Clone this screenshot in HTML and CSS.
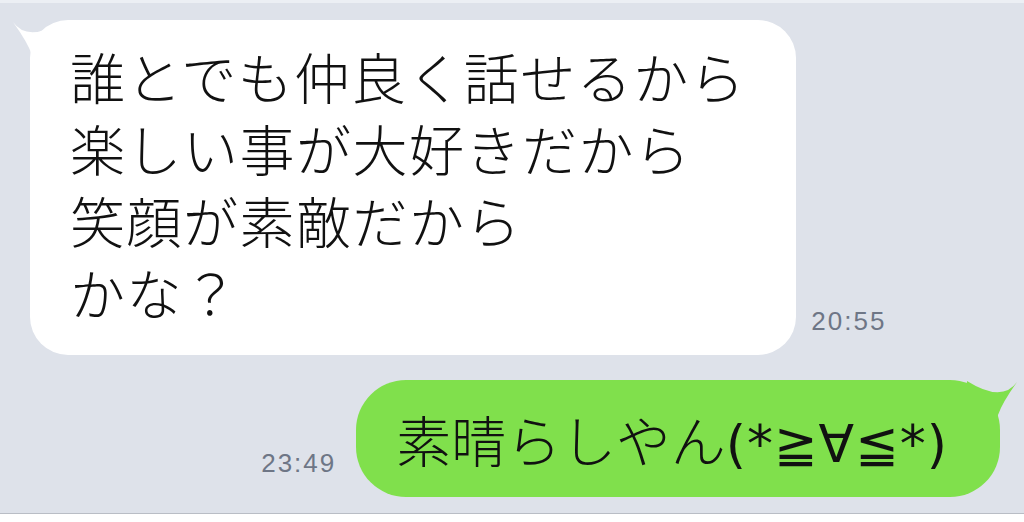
FILE: index.html
```html
<!DOCTYPE html>
<html lang="ja">
<head>
  <meta charset="UTF-8" />
  <meta name="viewport" content="width=device-width, initial-scale=1.0"/>
  <title>Talk</title>
  <link rel="stylesheet" href="styles.css">
</head>
<body>

<div class="chat">
  <div class="row row-in">
    <div class="bubble bubble-in">
      <svg class="tail tail-in" width="60" height="60" viewBox="0 0 60 60">
        <path d="M3,2 Q18,23 53,1 L53,55 L22,55 L22,35 Q18,23 3,2 Z" fill="#ffffff"/>
      </svg>
      <p>誰とでも仲良く話せるから<br>楽しい事が大好きだから<br>笑顔が素敵だから<br>かな？</p>
    </div>
    <span class="time time-in">20:55</span>
  </div>

  <div class="row row-out">
    <span class="time time-out">23:49</span>
    <div class="bubble bubble-out">
      <svg class="tail tail-out" width="60" height="60" viewBox="0 0 60 60">
        <path d="M3,2 Q18,23 53,1 L53,55 L22,55 L22,35 Q18,23 3,2 Z" fill="#80e04c"/>
      </svg>
      <p>素晴らしやん<span class="face">(*≧∀≦*)</span></p>
    </div>
  </div>
</div>

<div class="bottom-bar"></div>

</body>
</html>
```

FILE: styles.css
```css
body {
  margin: 0;
  background-color: #dee2ea;
  font-family: "Noto Sans CJK JP", "Noto Sans", sans-serif;
  color: #111;
  overflow: hidden;
}

.chat {
  height: 513px;
  border-top: 3px solid #eceff4;
  box-sizing: border-box;
  padding: 17px 24px 0 30px;
}

.row {
  display: flex;
  align-items: flex-end;
}

.row-out {
  justify-content: flex-end;
  margin-top: 25px;
}

.bubble {
  position: relative;
}

.bubble p {
  margin: 0;
  font-size: 55px;
  line-height: 72px;
  letter-spacing: 1.5px;
  font-weight: 300;
  white-space: nowrap;
}

.bubble-in {
  background-color: #ffffff;
  border-radius: 38px;
  padding: 19px 50px 28px 40px;
}

.bubble-out {
  background-color: #80e04c;
  border-radius: 50px;
  padding: 22px 52px 23px 40px;
}

.bubble-out p {
  letter-spacing: 0;
}

/* emoticon glyphs are narrow in the original, use a western font */
.face {
  font-family: "DejaVu Sans", sans-serif;
  font-weight: 400;
  font-size: 52px;
  line-height: 40px;
  letter-spacing: 1px;
}

.tail {
  position: absolute;
  top: 0;
}

.tail-in {
  left: -20px;
}

.tail-out {
  right: -20px;
  transform: scaleX(-1);
}

.time {
  font-family: "Liberation Sans", Arial, sans-serif;
  font-size: 26px;
  letter-spacing: 2px;
  color: #6e7686;
  margin-bottom: 18px;
}

.time-in {
  margin-left: 15px;
}

.time-out {
  margin-right: 20px;
}

.bottom-bar {
  height: 9px;
  border-top: 1px solid #b9bdc5;
  background-color: #ffffff;
}
```
